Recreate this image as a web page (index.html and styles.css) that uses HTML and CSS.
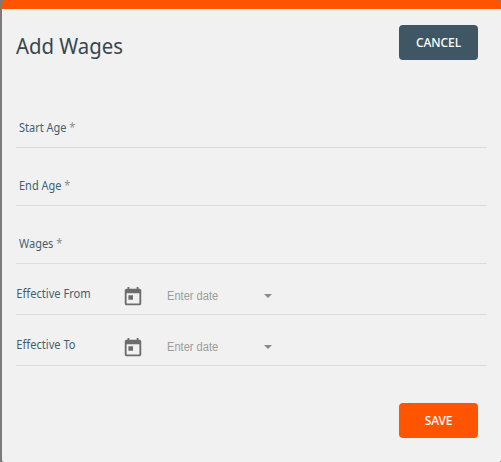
FILE: index.html
```html
<!DOCTYPE html>
<html lang="en">
<head>
<meta charset="utf-8">
<title>Add Wages</title>
<link rel="stylesheet" href="styles.css">
</head>
<body>
<form class="dialog">
  <header class="header">
    <h1 class="title">Add Wages</h1>
    <button class="btn btn-cancel" type="button">CANCEL</button>
  </header>
  <div class="fields">
    <label class="field"><span class="field-label">Start Age <i class="req">*</i></span></label>
    <label class="field"><span class="field-label">End Age <i class="req">*</i></span></label>
    <label class="field"><span class="field-label">Wages <i class="req">*</i></span></label>
    <div class="date-row">
      <span class="date-label">Effective From</span>
      <svg class="calendar" viewBox="0 0 24 24"><path d="M19 3h-1V1h-2v2H8V1H6v2H5c-1.11 0-1.99.9-1.99 2L3 19c0 1.1.89 2 2 2h14c1.1 0 2-.9 2-2V5c0-1.1-.9-2-2-2zm0 16H5V8h14v11zM7 10h5v5H7z"/></svg>
      <span class="date-value">Enter date</span>
      <span class="caret"></span>
    </div>
    <div class="date-row">
      <span class="date-label">Effective To</span>
      <svg class="calendar" viewBox="0 0 24 24"><path d="M19 3h-1V1h-2v2H8V1H6v2H5c-1.11 0-1.99.9-1.99 2L3 19c0 1.1.89 2 2 2h14c1.1 0 2-.9 2-2V5c0-1.1-.9-2-2-2zm0 16H5V8h14v11zM7 10h5v5H7z"/></svg>
      <span class="date-value">Enter date</span>
      <span class="caret"></span>
    </div>
  </div>
  <footer class="footer"><button class="btn btn-save" type="button">SAVE</button></footer>
</form>
</body>
</html>
```

FILE: styles.css
```css
* { box-sizing: border-box; }
body {
  margin: 0;
  height: 462px;
  padding-left: 2px;
  overflow: hidden;
  background: #7b7b7b;
  font-family: "Noto Sans", sans-serif;
}
.dialog {
  height: 462px;
  padding: 16px 14px 0;
  border-top: 9px solid #ff5400;
  border-radius: 4px 4px 2px 2px;
  background: #f1f1f1;
}
.header {
  display: flex;
  justify-content: space-between;
  height: 35px;
  padding-right: 9px;
}
.title {
  margin: 5px 0 0;
  font-size: 22px;
  line-height: 30px;
  font-weight: 400;
  color: #37474f;
  transform: scaleX(0.925);
  transform-origin: left;
}
.btn {
  width: 79px;
  height: 35px;
  padding: 0;
  border: 0;
  border-radius: 4px;
  color: #fff;
  font: 500 12px/35px "Noto Sans", sans-serif;
  letter-spacing: -0.1px;
}
.btn-cancel { background: #3f5765; }
.btn-save { background: #ff5400; }
.fields { padding-top: 30px; color: #455f6e; font-size: 12px; }
.field {
  display: flex;
  align-items: flex-end;
  height: 58px;
  padding: 0 3px 11px;
  border-bottom: 1px solid #dcdcdc;
  line-height: 16px;
}
.field-label { transform: scaleX(0.915); transform-origin: left; }
.req { font-style: normal; color: #8a8f92; }
.date-row {
  display: flex;
  align-items: flex-start;
  height: 51px;
  padding-top: 21px;
  border-bottom: 1px solid #dcdcdc;
}
.date-label {
  width: 106px;
  padding-left: 0.4px;
  line-height: 17px;
  transform: scaleX(0.925);
  transform-origin: left;
}
.calendar { width: 22px; height: 22px; margin-top: 0.5px; fill: #6c6c6c; }
.date-value {
  width: 97px;
  margin: 2px 0 0 23px;
  color: #9c9c9c;
  font: 12px/18px "Liberation Sans", sans-serif;
  transform: scaleX(0.925);
  transform-origin: left;
}
.caret {
  margin-top: 9px;
  border: 4px solid transparent;
  border-top-color: #8a8a8a;
  border-bottom: 0;
}
.footer { display: flex; justify-content: flex-end; padding: 37px 9px 0 0; }
```
